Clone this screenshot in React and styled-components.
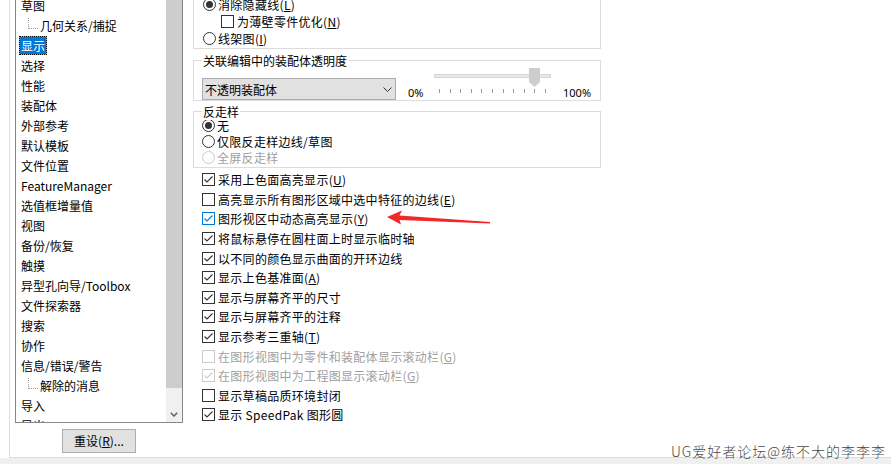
import React from "react";
import styled, { createGlobalStyle } from "styled-components";

const GlobalStyle = createGlobalStyle`
  html, body { margin: 0; padding: 0; background: #fff; }
  body {
    font-family: "Noto Sans CJK SC", "Noto Sans", sans-serif;
    font-size: 12px;
    color: #000;
  }
  #root { width: 891px; height: 464px; overflow: hidden; }
`;

const Page = styled.div`
  position: relative;
  width: 891px;
  height: 464px;
  display: flex;
  flex-direction: column;
  overflow: hidden;
  background: #fff;
`;

const Frame = styled.div`
  box-sizing: border-box;
  height: 458px;
  margin-left: 9px;
  border-left: 1px solid #dcdcdc;
  border-bottom: 1px solid #dcdcdc;
  display: flex;
  align-items: flex-start;
  overflow: hidden;
`;

const Footer = styled.div`
  flex: 1;
  background: #f0f0f0;
`;

const LeftCol = styled.div`
  display: flex;
  flex-direction: column;
  padding-left: 5px;
  width: 168px;
  flex-shrink: 0;
`;

const ListBox = styled.div`
  box-sizing: border-box;
  width: 168px;
  height: 424px;
  margin-top: -1px;
  border: 1px solid #828790;
  display: flex;
  overflow: hidden;
`;

const ListItems = styled.div`
  flex: 1;
  display: flex;
  flex-direction: column;
  margin-top: -5px;
`;

const Item = styled.div`
  height: 20px;
  flex-shrink: 0;
  display: flex;
  align-items: center;
  padding-left: ${(p) => (p.$child ? 12 : 3)}px;
`;

const ItemLabel = styled.span`
  box-sizing: border-box;
  height: 19px;
  line-height: 17px;
  padding: 0 1px;
  white-space: nowrap;
  border: 1px solid ${(p) => (p.$selected ? "#f0a000" : "transparent")};
  outline: ${(p) => (p.$selected ? "1px dotted #000" : "none")};
  outline-offset: -1px;
  background: ${(p) => (p.$selected ? "#0078d7" : "transparent")};
  color: ${(p) => (p.$selected ? "#fff" : "#000")};
`;

const Connector = styled.span`
  width: 9px;
  height: 10px;
  align-self: flex-start;
  margin-top: 3px;
  border-left: 1px dotted #9a9a9a;
  border-bottom: 1px dotted #9a9a9a;
`;

const ScrollBar = styled.div`
  width: 16px;
  flex-shrink: 0;
  display: flex;
  flex-direction: column;
`;

const ScrollThumb = styled.div`
  flex: 1;
  background: #cdcdcd;
`;

const ScrollTrack = styled.div`
  height: 34px;
  background: #f0f0f0;
  display: flex;
  align-items: flex-end;
  justify-content: center;
  padding-bottom: 5px;
  box-sizing: border-box;
`;

const ResetButton = styled.button`
  box-sizing: border-box;
  margin-top: 6px;
  margin-left: 47px;
  width: 74px;
  height: 24px;
  padding: 0;
  border: 1px solid #adadad;
  background: #e1e1e1;
  font-family: inherit;
  font-size: 12px;
  color: #000;
  line-height: 20px;
`;

const RightCol = styled.div`
  margin-left: 10px;
  width: 408px;
  flex-shrink: 0;
  display: flex;
  flex-direction: column;
`;

const Group = styled.div`
  position: relative;
  box-sizing: border-box;
  border: 1px solid #dcdcdc;
  height: ${(p) => p.$h}px;
  margin-top: ${(p) => p.$mt}px;
  padding: ${(p) => p.$pad};
`;

const Legend = styled.span`
  position: absolute;
  top: -8px;
  left: 8px;
  line-height: 16px;
  padding: 0 1px;
  background: #fff;
  white-space: nowrap;
`;

const Rows = styled.div`
  display: flex;
  flex-direction: column;
  margin-top: ${(p) => p.$mt || 0}px;
`;

const OptionRow = styled.div`
  height: ${(p) => p.$h}px;
  flex-shrink: 0;
  display: flex;
  align-items: center;
  padding-left: ${(p) => p.$indent || 0}px;
  color: ${(p) => (p.$disabled ? "#a0a0a0" : "#000")};
  white-space: nowrap;
  letter-spacing: 0.3px;
`;

const RadioCircle = styled.span`
  box-sizing: border-box;
  width: 13px;
  height: 13px;
  border-radius: 50%;
  border: 1px solid ${(p) => (p.$disabled ? "#cccccc" : "#333333")};
  display: flex;
  align-items: center;
  justify-content: center;
  margin-right: 2px;
  flex-shrink: 0;
`;

const RadioDot = styled.span`
  width: 7px;
  height: 7px;
  border-radius: 50%;
  background: #333;
`;

const CheckBoxBox = styled.span`
  box-sizing: border-box;
  width: 13px;
  height: 13px;
  border: 1px solid ${(p) => p.$color};
  display: flex;
  align-items: center;
  justify-content: center;
  margin-right: 3px;
  flex-shrink: 0;
`;

const Dropdown = styled.div`
  box-sizing: border-box;
  width: 194px;
  height: 22px;
  border: 1px solid #adadad;
  background: #e1e1e1;
  display: flex;
  align-items: center;
  justify-content: space-between;
  padding: 0 3px 0 2px;
  flex-shrink: 0;
`;

const SliderRow = styled.div`
  display: flex;
  align-items: flex-end;
  height: 22px;
`;

const PercentLabel = styled.span`
  line-height: 14px;
  width: ${(p) => p.$w}px;
  margin-left: ${(p) => p.$ml}px;
  font-family: "Noto Sans", sans-serif;
  font-size: 11px;
  flex-shrink: 0;
  white-space: nowrap;
`;

const SliderCol = styled.div`
  width: 117px;
  margin-bottom: 7px;
  display: flex;
  flex-direction: column;
  flex-shrink: 0;
`;

const TrackArea = styled.div`
  position: relative;
  height: 20px;
`;

const Track = styled.div`
  box-sizing: border-box;
  margin-top: 6px;
  height: 4px;
  background: #e7eaea;
  border: 1px solid #d6d6d6;
`;

const Thumb = styled.svg`
  position: absolute;
  top: 0;
`;

const Ticks = styled.div`
  display: flex;
  justify-content: space-between;
  padding: 0 5px;
  margin-top: 1px;
  height: 4px;
`;

const Tick = styled.span`
  width: 1px;
  height: 4px;
  background: #9a9a9a;
`;

const CheckList = styled.div`
  display: flex;
  flex-direction: column;
  margin-top: 2px;
  padding-left: 9px;
`;

const Watermark = styled.div`
  position: absolute;
  left: 671px;
  top: 443px;
  font-size: 14px;
  line-height: 16px;
  color: #4a4a4a;
  font-weight: 300;
  letter-spacing: 1px;
  white-space: nowrap;
`;

const Arrow = styled.svg`
  position: absolute;
  left: 380px;
  top: 205px;
`;

const Acc = ({ text, k }) => (
  <>
    {text}
    {k ? (
      <span>
        (<u>{k}</u>)
      </span>
    ) : null}
  </>
);

const Radio = ({ checked, disabled, children, h, indent }) => (
  <OptionRow $h={h} $indent={indent} $disabled={disabled}>
    <RadioCircle $disabled={disabled}>{checked ? <RadioDot /> : null}</RadioCircle>
    {children}
  </OptionRow>
);

const Check = ({ checked, disabled, focus, children, h, indent }) => {
  const color = disabled ? "#cccccc" : focus ? "#0078d7" : "#333333";
  return (
    <OptionRow $h={h} $indent={indent} $disabled={disabled}>
      <CheckBoxBox $color={color}>
        {checked ? (
          <svg width="11" height="11" viewBox="0 0 11 11">
            <polyline points="1.5,5.5 4,8 9.5,2.5" fill="none" stroke={color} strokeWidth="1.1" />
          </svg>
        ) : null}
      </CheckBoxBox>
      {children}
    </OptionRow>
  );
};

const navItems = [
  { t: "草图" },
  { t: "几何关系/捕捉", child: true },
  { t: "显示", sel: true },
  { t: "选择" },
  { t: "性能" },
  { t: "装配体" },
  { t: "外部参考" },
  { t: "默认模板" },
  { t: "文件位置" },
  { t: "FeatureManager" },
  { t: "选值框增量值" },
  { t: "视图" },
  { t: "备份/恢复" },
  { t: "触摸" },
  { t: "异型孔向导/Toolbox" },
  { t: "文件探索器" },
  { t: "搜索" },
  { t: "协作" },
  { t: "信息/错误/警告" },
  { t: "解除的消息", child: true },
  { t: "导入" },
  { t: "导出" },
];

const checks = [
  { t: "采用上色面高亮显示", k: "U", c: true },
  { t: "高亮显示所有图形区域中选中特征的边线", k: "E", c: false },
  { t: "图形视区中动态高亮显示", k: "Y", c: true, f: true },
  { t: "将鼠标悬停在圆柱面上时显示临时轴", c: true },
  { t: "以不同的颜色显示曲面的开环边线", c: true },
  { t: "显示上色基准面", k: "A", c: true },
  { t: "显示与屏幕齐平的尺寸", c: true },
  { t: "显示与屏幕齐平的注释", c: true },
  { t: "显示参考三重轴", k: "T", c: true },
  { t: "在图形视图中为零件和装配体显示滚动栏", k: "G", c: false, d: true },
  { t: "在图形视图中为工程图显示滚动栏", k: "G", c: true, d: true },
  { t: "显示草稿品质环境封闭", c: false },
  { t: "显示 SpeedPak 图形圆", c: true },
];

export default function App() {
  const sliderValue = 90;
  const thumbLeft = (sliderValue / 100) * (117 - 11);
  return (
    <Page>
      <GlobalStyle />
      <Frame>
        <LeftCol>
          <ListBox>
            <ListItems>
              {navItems.map((it, i) => (
                <Item key={i} $child={it.child}>
                  {it.child ? <Connector /> : null}
                  <ItemLabel $selected={it.sel}>{it.t}</ItemLabel>
                </Item>
              ))}
            </ListItems>
            <ScrollBar>
              <ScrollThumb />
              <ScrollTrack>
                <svg width="8" height="5" viewBox="0 0 8 5">
                  <polyline points="0.8,0.8 4,4 7.2,0.8" fill="none" stroke="#606060" strokeWidth="1.5" />
                </svg>
              </ScrollTrack>
            </ScrollBar>
          </ListBox>
          <ResetButton>
            重设(<u>R</u>)...
          </ResetButton>
        </LeftCol>

        <RightCol>
          <Group $h={50} $mt={-1} $pad="0 0 0 9px">
            <Rows $mt={-4}>
              <Radio h={17} checked>
                <Acc text="消除隐藏线" k="L" />
              </Radio>
              <Check h={17} indent={18}>
                <Acc text="为薄壁零件优化" k="N" />
              </Check>
              <Radio h={17}>
                <Acc text="线架图" k="I" />
              </Radio>
            </Rows>
          </Group>

          <Group $h={41} $mt={11} $pad="17px 0 0 8px">
            <Legend>关联编辑中的装配体透明度</Legend>
            <SliderRow>
              <Dropdown>
                <span>不透明装配体</span>
                <svg width="9" height="5" viewBox="0 0 9 5">
                  <polyline points="0.5,0.5 4.5,4.5 8.5,0.5" fill="none" stroke="#333" strokeWidth="1" />
                </svg>
              </Dropdown>
              <PercentLabel $w={26} $ml={12}>0%</PercentLabel>
              <SliderCol>
                <TrackArea>
                  <Track />
                  <Thumb width="11" height="19" viewBox="0 0 11 19" style={{ left: thumbLeft }}>
                    <polygon points="0,0 11,0 11,14 5.5,19 0,14" fill="#cdcdcd" />
                  </Thumb>
                </TrackArea>
                <Ticks>
                  {Array.from({ length: 11 }).map((_, i) => (
                    <Tick key={i} />
                  ))}
                </Ticks>
              </SliderCol>
              <PercentLabel $w={30} $ml={12}>100%</PercentLabel>
            </SliderRow>
          </Group>

          <Group $h={57} $mt={10} $pad="5px 0 0 8px">
            <Legend>反走样</Legend>
            <Rows>
              <Radio h={16} checked>
                无
              </Radio>
              <Radio h={16}>仅限反走样边线/草图</Radio>
              <Radio h={16} disabled>
                全屏反走样
              </Radio>
            </Rows>
          </Group>

          <CheckList>
            {checks.map((c, i) => (
              <Check key={i} h={19.6} checked={c.c} disabled={c.d} focus={c.f}>
                <Acc text={c.t} k={c.k} />
              </Check>
            ))}
          </CheckList>
        </RightCol>
      </Frame>
      <Footer />
      <Watermark>UG爱好者论坛@练不大的李李李</Watermark>
      <Arrow width="115" height="25" viewBox="0 0 115 25">
        <polygon
          points="7,12 22,5.5 19.5,10.5 110,17 110,18.5 19.5,15 21,19.5"
          fill="#f02828"
        />
      </Arrow>
    </Page>
  );
}
